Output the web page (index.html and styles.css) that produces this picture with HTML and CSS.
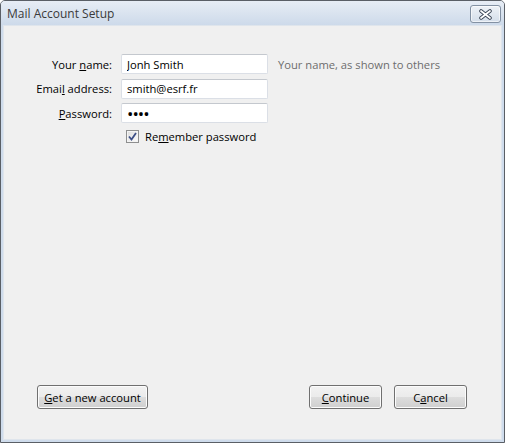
FILE: index.html
```html
<!DOCTYPE html>
<html lang="en">
  <head>
    <meta charset="UTF-8" />
    <meta name="viewport" content="width=device-width, initial-scale=1.0" />
    <title>Mail Account Setup</title>
    <link rel="stylesheet" href="styles.css">
  </head>
  <body>
    <div class="window">
      <div class="titlebar">
        <span class="title">Mail Account Setup</span>
        <button type="button" class="close-btn" aria-label="Close">
          <svg width="15" height="11" viewBox="0 0 15 11">
            <path d="M3 2 L12 9 M12 2 L3 9" stroke="#3b4656" stroke-width="3.6" stroke-linecap="round" fill="none" />
            <path d="M3 2 L12 9 M12 2 L3 9" stroke="#ffffff" stroke-width="1.8" stroke-linecap="round" fill="none" />
          </svg>
        </button>
      </div>
      <div class="client">
        <form class="setup-form" id="setup-form">
          <label for="name" class="field-label">Your <u>n</u>ame:</label>
          <input type="text" id="name" class="field" value="Jonh Smith" />
          <span class="hint">Your name, as shown to others</span>

          <label for="email" class="field-label">Emai<u>l</u> address:</label>
          <input type="text" id="email" class="field" value="smith@esrf.fr" />
          <span></span>

          <label for="password" class="field-label"><u>P</u>assword:</label>
          <input type="password" id="password" class="field field-password" value="abcd" />
          <span></span>

          <span></span>
          <label class="remember">
            <span class="checkbox">
              <svg width="9" height="9" viewBox="0 0 9 9">
                <path d="M1 4.5 L3.5 7.5 L8 1" stroke="#3d4f86" stroke-width="1.8" fill="none" />
              </svg>
            </span>
            <span>Re<u>m</u>ember password</span>
          </label>
        </form>

        <div class="actions">
          <button type="button" class="btn btn-wide"><u>G</u>et a new account</button>
          <div class="actions-right">
            <button type="button" class="btn"><u>C</u>ontinue</button>
            <button type="button" class="btn">C<u>a</u>ncel</button>
          </div>
        </div>
      </div>
    </div>
  </body>
</html>
```

FILE: styles.css
```css
html,
body {
  margin: 0;
  padding: 0;
  background: #fff;
}
body {
  font-family: "Open Sans", "Noto Sans", Arial, sans-serif;
  font-size: 11.2px;
  color: #000;
}
.window {
  width: 505px;
  height: 443px;
  box-sizing: border-box;
  border: 1px solid #5a5f66;
  border-radius: 5px 5px 0 0;
  background: #cfdcec;
  display: flex;
  flex-direction: column;
  overflow: hidden;
}
.titlebar {
  height: 24px;
  flex: none;
  display: flex;
  align-items: center;
  justify-content: space-between;
  padding: 0 3px 0 6px;
  background: linear-gradient(#e7edf5, #cddaea);
}
.title {
  font-size: 12px;
  color: #3a3a3a;
  padding-top: 1px;
}
.close-btn {
  width: 31px;
  height: 18px;
  margin-top: 2px;
  padding: 0;
  border: 1px solid #8391a3;
  border-radius: 3px;
  background: linear-gradient(#eef2f7, #d4deea);
  box-shadow: inset 0 0 0 1px rgba(255, 255, 255, 0.6);
  display: flex;
  align-items: center;
  justify-content: center;
}
.client {
  flex: 1;
  margin: 0 2px 2px 2px;
  border: 1px solid #dfe5ec;
  background: #f0f0f0;
  display: flex;
  flex-direction: column;
  padding: 28px 0 30px 0;
}
.setup-form {
  display: grid;
  grid-template-columns: 108px 147px auto;
  column-gap: 9px;
  row-gap: 4.5px;
  align-items: center;
}
.field-label {
  text-align: right;
}
.field {
  box-sizing: border-box;
  height: 20px;
  margin: 0;
  padding: 0 5px;
  font-family: inherit;
  font-size: 11.2px;
  color: #000;
  background: #fff;
  border: 1px solid #dbdfe6;
  border-top-color: #c4c8ce;
  border-radius: 2px;
  outline: none;
}
.field-password {
  font-size: 17px;
  letter-spacing: -1px;
}
.hint {
  color: #6d6d6d;
  margin-left: 1px;
}
.remember {
  grid-column: 2 / 4;
  display: flex;
  align-items: center;
  gap: 6px;
  height: 20px;
  padding-left: 5px;
  margin-top: -1px;
}
.checkbox {
  box-sizing: border-box;
  width: 13px;
  height: 13px;
  border: 1px solid #8e8f8f;
  background: linear-gradient(135deg, #dcdcdc, #fdfdfd);
  box-shadow: inset 0 0 0 1px #f4f4f4;
  display: flex;
  align-items: center;
  justify-content: center;
}
.actions {
  margin-top: auto;
  display: flex;
  justify-content: space-between;
  padding: 0 34px 0 33px;
}
.actions-right {
  display: flex;
  gap: 12px;
}
.btn {
  box-sizing: border-box;
  width: 73px;
  height: 24px;
  margin: 0;
  padding: 0;
  font-family: inherit;
  font-size: 11.2px;
  color: #000;
  border: 1px solid #707070;
  border-radius: 3px;
  background: linear-gradient(#f2f2f2 0%, #ebebeb 50%, #dddddd 51%, #cfcfcf 100%);
  box-shadow: inset 0 0 0 1px #fcfcfc;
}
.btn-wide {
  width: 111px;
}
```
